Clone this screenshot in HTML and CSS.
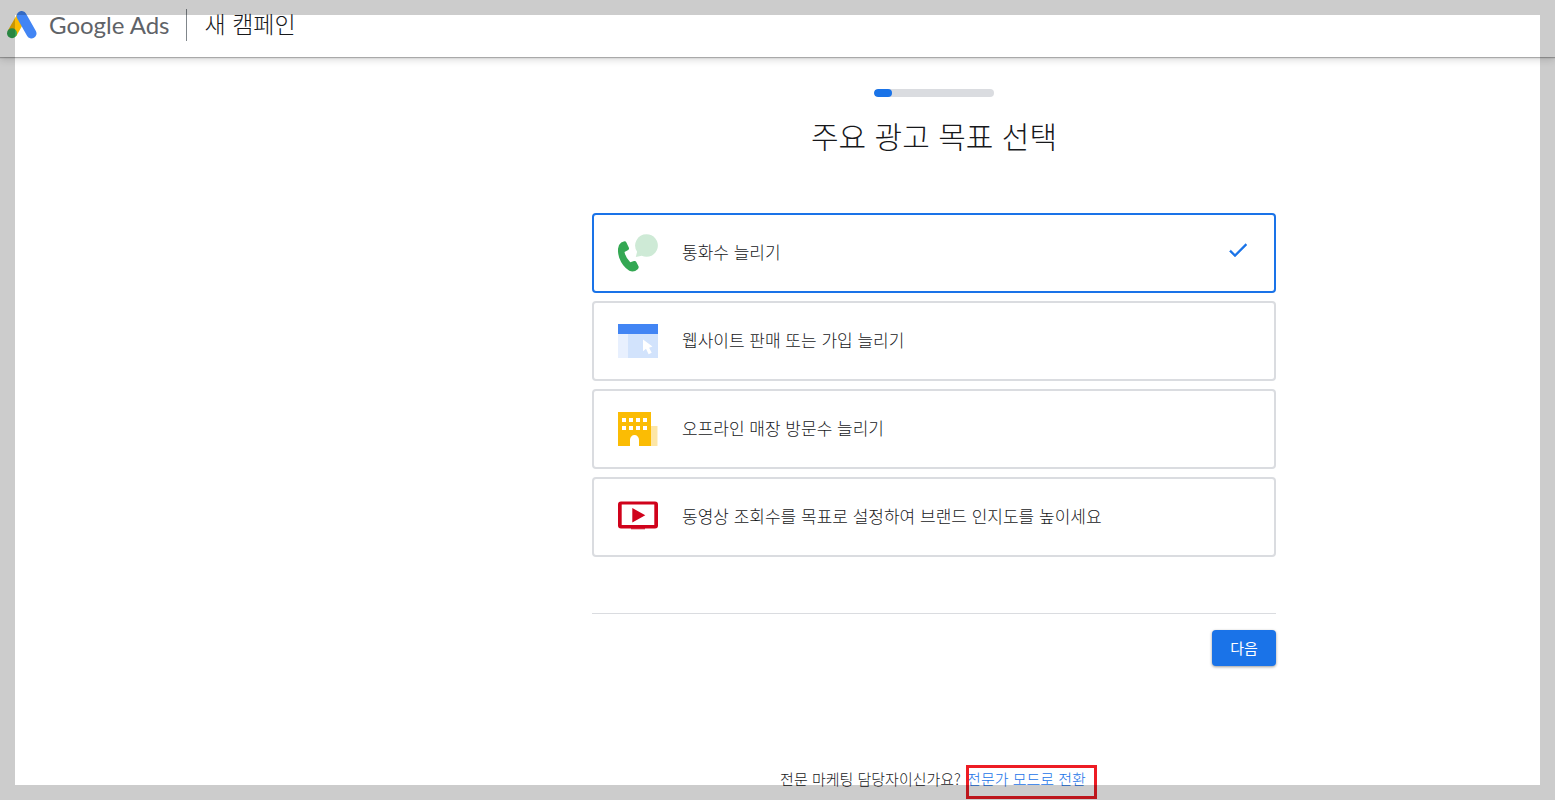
FILE: index.html
```html
<!DOCTYPE html>
<html lang="ko">
<head>
<meta charset="utf-8">
<meta name="viewport" content="width=device-width, initial-scale=1">
<title>Google Ads - 새 캠페인</title>
<link rel="stylesheet" href="styles.css">
</head>
<body>
<header class="topbar">
  <svg class="logo" viewBox="0 0 30 28" aria-hidden="true">
    <path d="M5 22.5 14.6 5.5" stroke="#fbbc04" stroke-width="10" fill="none"/>
    <path d="M14.6 5 24.5 22.5" stroke="#4285f4" stroke-width="10" stroke-linecap="round" fill="none"/>
    <circle cx="5" cy="22.3" r="5" fill="#34a853"/>
  </svg>
  <span class="brand">Google Ads</span>
  <span class="page-name">새 캠페인</span>
</header>
<main class="content">
  <div class="progress" role="progressbar" aria-label="진행률" aria-valuenow="15" aria-valuemin="0" aria-valuemax="100"><div class="progress-fill"></div></div>
  <h1 class="title">주요 광고 목표 선택</h1>
  <div class="goals">
    <button class="goal goal-selected" type="button" aria-pressed="true">
      <svg class="goal-icon" viewBox="0 0 40 40" aria-hidden="true">
        <path d="M28.5 1.2a11.3 11.3 0 1 1-4.8 21.5l-5.9 1.3 1.3-5.2A11.3 11.3 0 0 1 28.5 1.2Z" fill="#ceead6"/>
        <path d="M3.2 9.6 5.8 8.5Q7.6 7.9 8.4 9.5L10.9 14.8Q11.4 16.2 10.2 17.1L6.5 19Q7.5 24.5 12.3 29.3L16 28.1Q17.6 27.6 18.3 29L20.5 33.2Q21.1 34.9 19.7 36.2 16 39.7 11.3 37.7 4.4 33.6 1.2 24.7-2.1 13.4 3.2 9.6Z" fill="#34a853"/>
      </svg>
      <span class="goal-text">통화수 늘리기</span>
      <svg class="check" viewBox="0 0 24 24" aria-hidden="true"><path d="M9 16.17 4.83 12l-1.42 1.41L9 19 21 7l-1.41-1.41z" fill="#1a73e8" stroke="#1a73e8" stroke-width=".4"/></svg>
    </button>
    <button class="goal" type="button" aria-pressed="false">
      <svg class="goal-icon" viewBox="0 0 40 40" aria-hidden="true">
        <path d="M0 3h40v10H0z" fill="#4285f4"/>
        <path d="M0 13h10v24H0z" fill="#e8f0fe"/>
        <path d="M10 13h30v24H10z" fill="#d2e3fc"/>
        <path d="M25 18.5v11.8l3-2.5 2.6 5.4 3.1-1.5-2.6-5 3.4-1.1z" fill="#fff"/>
      </svg>
      <span class="goal-text">웹사이트 판매 또는 가입 늘리기</span>
    </button>
    <button class="goal" type="button" aria-pressed="false">
      <svg class="goal-icon" viewBox="0 0 40 40" aria-hidden="true">
        <path d="M33 17h6.5v20H33z" fill="#fde6a6"/>
        <path d="M0 3h33v34H0z" fill="#fbbc04"/>
        <path d="M4 9h4v4H4zm7 0h4v4h-4zm7 0h4v4h-4zm7 0h4v4h-4zM4 17h4v4H4zm7 0h4v4h-4zm7 0h4v4h-4zm7 0h4v4h-4zM12 37v-6a4.5 5 0 0 1 9 0v6z" fill="#fff"/>
      </svg>
      <span class="goal-text">오프라인 매장 방문수 늘리기</span>
    </button>
    <button class="goal" type="button" aria-pressed="false">
      <svg class="goal-icon" viewBox="0 0 40 40" aria-hidden="true">
        <rect y="4.5" width="40" height="27" rx="3" fill="#d0021b"/>
        <path d="M3.7 7.5h32.6v20.6H3.7z" fill="#fff"/>
        <path d="M13 31.3h14v1H13zM14.3 11v14.6l13-7.3z" fill="#d0021b"/>
      </svg>
      <span class="goal-text">동영상 조회수를 목표로 설정하여 브랜드 인지도를 높이세요</span>
    </button>
  </div>
  <div class="actions"><button class="next" type="button">다음</button></div>
  <p class="expert">전문 마케팅 담당자이신가요? <a class="expert-link" href="#expert">전문가 모드로 전환</a></p>
</main>
<div class="frame" aria-hidden="true"></div>
</body>
</html>
```
FILE: styles.css
```css
* {
  box-sizing: border-box;
}

body {
  margin: 0;
  min-height: 100vh;
  overflow: hidden;
  background: #fff;
  color: #17181b;
  font-family: "Noto Sans CJK KR", sans-serif;
  font-weight: 300;
}

.topbar {
  display: flex;
  align-items: center;
  height: 57px;
  padding: 0 7px 8px;
  box-shadow: 0 1px 1px rgba(0, 0, 0, 0.25), 0 2px 8px rgba(0, 0, 0, 0.18);
}

.logo {
  width: 30px;
  height: 28px;
}

.brand {
  margin-left: 12px;
  padding-right: 16px;
  border-right: 1px solid #80868b;
  color: #5f6368;
  font: 400 24px/32px Lato, sans-serif;
}

.page-name {
  margin-left: 18px;
  padding-bottom: 4px;
  font-size: 23px;
  line-height: 32px;
}

.content {
  display: flex;
  flex-direction: column;
  align-items: center;
  padding: 32px 0 0 313px;
}

.progress {
  width: 120px;
  height: 8px;
  overflow: hidden;
  border-radius: 4px;
  background: #dadce0;
}

.progress-fill {
  width: 15%;
  height: 100%;
  border-radius: 4px;
  background: #1a73e8;
}

.title {
  margin: 18px 0 58px;
  font-size: 30px;
  font-weight: 300;
  line-height: 40px;
}

.goals {
  display: flex;
  flex-direction: column;
  gap: 8px;
  width: 100%;
  max-width: 684px;
}

.goal {
  display: flex;
  align-items: center;
  gap: 24px;
  min-height: 80px;
  padding: 0 24px;
  border: 2px solid #dadce0;
  border-radius: 4px;
  background: #fff;
  color: inherit;
  font: inherit;
  font-size: 17px;
  line-height: 24px;
  text-align: left;
}

.goal-selected {
  border-color: #1a73e8;
}

.goal-icon {
  flex: none;
  width: 40px;
  height: 40px;
}

.goal-text {
  flex: 1;
  padding-bottom: 2px;
}

.check {
  width: 24px;
  height: 24px;
  margin-bottom: 6px;
}

.actions {
  display: flex;
  justify-content: flex-end;
  width: 100%;
  max-width: 684px;
  margin-top: 56px;
  padding-top: 16px;
  border-top: 1px solid #dadce0;
}

.next {
  min-width: 64px;
  height: 36px;
  padding: 0 16px 2px;
  border: 0;
  border-radius: 4px;
  background: #1a73e8;
  box-shadow: 0 1px 3px rgba(0, 0, 0, 0.4);
  color: #fff;
  font: inherit;
  font-size: 15px;
  font-weight: 400;
}

.expert {
  margin: 100px 0 0;
  padding-left: 8px;
  font-size: 15px;
  line-height: 26px;
}

.expert-link {
  display: inline-block;
  margin-left: 2px;
  padding: 0 10px 6px 0;
  outline: 3px solid #ed1c24;
  outline-offset: -2px;
  color: #1a73e8;
  text-decoration: none;
}

.frame {
  position: fixed;
  inset: 0;
  border: 15px solid rgba(0, 0, 0, 0.2);
  pointer-events: none;
}
```
